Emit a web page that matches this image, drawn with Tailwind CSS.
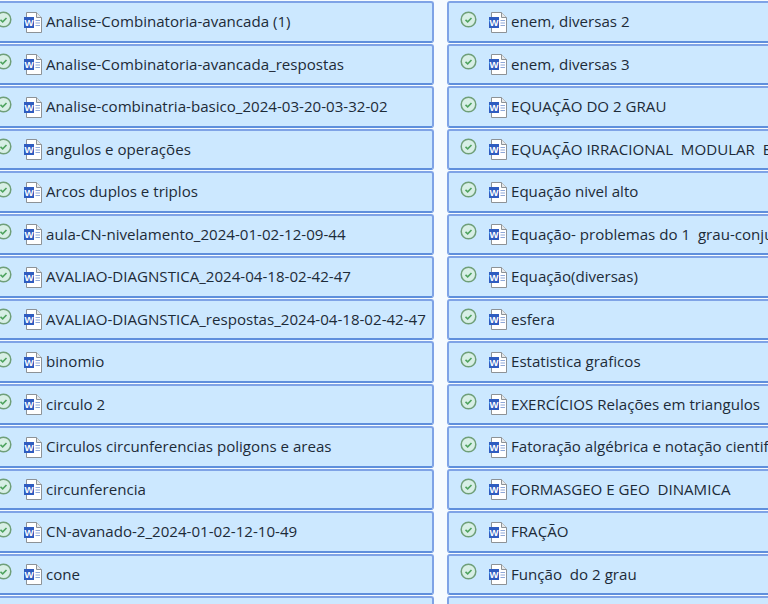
<!DOCTYPE html>
<html lang="pt">
<head>
<meta charset="utf-8" />
<title>Arquivos</title>
<script src="https://cdn.jsdelivr.net/npm/@tailwindcss/browser@4"></script>
</head>
<body class="w-[768px] h-[604px] overflow-hidden bg-[#f6fbff] font-['Open_Sans','Noto_Sans',sans-serif] text-[15.100px] text-[#1d2b38]">
<svg class="hidden">
  <symbol id="ok" viewBox="0 0 17 17">
    <circle cx="8.500" cy="8.500" r="7.300" fill="#d8efe6" stroke="#6f9f78" stroke-width="1.500" />
    <path d="M5.500 8.800l2.200 2 3.800-3.800" fill="none" stroke="#4fa35f" stroke-width="1.600" />
  </symbol>
  <symbol id="word" viewBox="0 0 20 22">
    <path d="M3.500 1.500H13.500L18.500 6.500V21.500H3.500z" fill="#fff" stroke="#8d9296" />
    <path d="M13.500 1.500v5h5" fill="#e6e8ea" stroke="#8d9296" />
    <path d="M12.500 9.500h4.500M12.500 12h4.500M12.500 14.500h4.500" stroke="#8fa8d8" />
    <rect x="1" y="6" width="10" height="11" fill="#2f5cc0" />
    <text x="6" y="14.800" text-anchor="middle" font-family="Liberation Sans" font-weight="700" font-size="9.500" fill="#fff">W</text>
  </symbol>
</svg>
<main class="flex gap-[13px] -ml-[18px] mt-[1px] w-[917px]">
  <section class="w-[452px] shrink-0 grid auto-rows-[42.500px]">
    <div class="mb-[1px] flex items-center pl-[11px] bg-[#cce8ff] border-2 border-[#7fa3e6] border-b-[#5f8fdc] rounded-[3px]"><svg class="w-[17px] h-[17px] mr-[11px] -mt-[5px]"><use href="#ok" /></svg><svg class="w-5 h-[22px] mr-[3px]"><use href="#word" /></svg><span class="whitespace-pre">Analise-Combinatoria-avancada (1)</span></div>
    <div class="mb-[1px] flex items-center pl-[11px] bg-[#cce8ff] border-2 border-[#7fa3e6] border-b-[#5f8fdc] rounded-[3px]"><svg class="w-[17px] h-[17px] mr-[11px] -mt-[5px]"><use href="#ok" /></svg><svg class="w-5 h-[22px] mr-[3px]"><use href="#word" /></svg><span class="whitespace-pre">Analise-Combinatoria-avancada_respostas</span></div>
    <div class="mb-[1px] flex items-center pl-[11px] bg-[#cce8ff] border-2 border-[#7fa3e6] border-b-[#5f8fdc] rounded-[3px]"><svg class="w-[17px] h-[17px] mr-[11px] -mt-[5px]"><use href="#ok" /></svg><svg class="w-5 h-[22px] mr-[3px]"><use href="#word" /></svg><span class="whitespace-pre">Analise-combinatria-basico_2024-03-20-03-32-02</span></div>
    <div class="mb-[1px] flex items-center pl-[11px] bg-[#cce8ff] border-2 border-[#7fa3e6] border-b-[#5f8fdc] rounded-[3px]"><svg class="w-[17px] h-[17px] mr-[11px] -mt-[5px]"><use href="#ok" /></svg><svg class="w-5 h-[22px] mr-[3px]"><use href="#word" /></svg><span class="whitespace-pre">angulos e operações</span></div>
    <div class="mb-[1px] flex items-center pl-[11px] bg-[#cce8ff] border-2 border-[#7fa3e6] border-b-[#5f8fdc] rounded-[3px]"><svg class="w-[17px] h-[17px] mr-[11px] -mt-[5px]"><use href="#ok" /></svg><svg class="w-5 h-[22px] mr-[3px]"><use href="#word" /></svg><span class="whitespace-pre">Arcos duplos e triplos</span></div>
    <div class="mb-[1px] flex items-center pl-[11px] bg-[#cce8ff] border-2 border-[#7fa3e6] border-b-[#5f8fdc] rounded-[3px]"><svg class="w-[17px] h-[17px] mr-[11px] -mt-[5px]"><use href="#ok" /></svg><svg class="w-5 h-[22px] mr-[3px]"><use href="#word" /></svg><span class="whitespace-pre">aula-CN-nivelamento_2024-01-02-12-09-44</span></div>
    <div class="mb-[1px] flex items-center pl-[11px] bg-[#cce8ff] border-2 border-[#7fa3e6] border-b-[#5f8fdc] rounded-[3px]"><svg class="w-[17px] h-[17px] mr-[11px] -mt-[5px]"><use href="#ok" /></svg><svg class="w-5 h-[22px] mr-[3px]"><use href="#word" /></svg><span class="whitespace-pre">AVALIAO-DIAGNSTICA_2024-04-18-02-42-47</span></div>
    <div class="mb-[1px] flex items-center pl-[11px] bg-[#cce8ff] border-2 border-[#7fa3e6] border-b-[#5f8fdc] rounded-[3px]"><svg class="w-[17px] h-[17px] mr-[11px] -mt-[5px]"><use href="#ok" /></svg><svg class="w-5 h-[22px] mr-[3px]"><use href="#word" /></svg><span class="whitespace-pre">AVALIAO-DIAGNSTICA_respostas_2024-04-18-02-42-47</span></div>
    <div class="mb-[1px] flex items-center pl-[11px] bg-[#cce8ff] border-2 border-[#7fa3e6] border-b-[#5f8fdc] rounded-[3px]"><svg class="w-[17px] h-[17px] mr-[11px] -mt-[5px]"><use href="#ok" /></svg><svg class="w-5 h-[22px] mr-[3px]"><use href="#word" /></svg><span class="whitespace-pre">binomio</span></div>
    <div class="mb-[1px] flex items-center pl-[11px] bg-[#cce8ff] border-2 border-[#7fa3e6] border-b-[#5f8fdc] rounded-[3px]"><svg class="w-[17px] h-[17px] mr-[11px] -mt-[5px]"><use href="#ok" /></svg><svg class="w-5 h-[22px] mr-[3px]"><use href="#word" /></svg><span class="whitespace-pre">circulo 2</span></div>
    <div class="mb-[1px] flex items-center pl-[11px] bg-[#cce8ff] border-2 border-[#7fa3e6] border-b-[#5f8fdc] rounded-[3px]"><svg class="w-[17px] h-[17px] mr-[11px] -mt-[5px]"><use href="#ok" /></svg><svg class="w-5 h-[22px] mr-[3px]"><use href="#word" /></svg><span class="whitespace-pre">Circulos circunferencias poligons e areas</span></div>
    <div class="mb-[1px] flex items-center pl-[11px] bg-[#cce8ff] border-2 border-[#7fa3e6] border-b-[#5f8fdc] rounded-[3px]"><svg class="w-[17px] h-[17px] mr-[11px] -mt-[5px]"><use href="#ok" /></svg><svg class="w-5 h-[22px] mr-[3px]"><use href="#word" /></svg><span class="whitespace-pre">circunferencia</span></div>
    <div class="mb-[1px] flex items-center pl-[11px] bg-[#cce8ff] border-2 border-[#7fa3e6] border-b-[#5f8fdc] rounded-[3px]"><svg class="w-[17px] h-[17px] mr-[11px] -mt-[5px]"><use href="#ok" /></svg><svg class="w-5 h-[22px] mr-[3px]"><use href="#word" /></svg><span class="whitespace-pre">CN-avanado-2_2024-01-02-12-10-49</span></div>
    <div class="mb-[1px] flex items-center pl-[11px] bg-[#cce8ff] border-2 border-[#7fa3e6] border-b-[#5f8fdc] rounded-[3px]"><svg class="w-[17px] h-[17px] mr-[11px] -mt-[5px]"><use href="#ok" /></svg><svg class="w-5 h-[22px] mr-[3px]"><use href="#word" /></svg><span class="whitespace-pre">cone</span></div>
    <div class="mb-[1px] flex items-center pl-[11px] bg-[#cce8ff] border-2 border-[#7fa3e6] border-b-[#5f8fdc] rounded-[3px]"></div>
  </section>
  <section class="w-[452px] shrink-0 grid auto-rows-[42.500px]">
    <div class="mb-[1px] flex items-center pl-[11px] bg-[#cce8ff] border-2 border-[#7fa3e6] border-b-[#5f8fdc] rounded-[3px]"><svg class="w-[17px] h-[17px] mr-[11px] -mt-[5px]"><use href="#ok" /></svg><svg class="w-5 h-[22px] mr-[3px]"><use href="#word" /></svg><span class="whitespace-pre">enem, diversas 2</span></div>
    <div class="mb-[1px] flex items-center pl-[11px] bg-[#cce8ff] border-2 border-[#7fa3e6] border-b-[#5f8fdc] rounded-[3px]"><svg class="w-[17px] h-[17px] mr-[11px] -mt-[5px]"><use href="#ok" /></svg><svg class="w-5 h-[22px] mr-[3px]"><use href="#word" /></svg><span class="whitespace-pre">enem, diversas 3</span></div>
    <div class="mb-[1px] flex items-center pl-[11px] bg-[#cce8ff] border-2 border-[#7fa3e6] border-b-[#5f8fdc] rounded-[3px]"><svg class="w-[17px] h-[17px] mr-[11px] -mt-[5px]"><use href="#ok" /></svg><svg class="w-5 h-[22px] mr-[3px]"><use href="#word" /></svg><span class="whitespace-pre">EQUAÇÃO DO 2 GRAU</span></div>
    <div class="mb-[1px] flex items-center pl-[11px] bg-[#cce8ff] border-2 border-[#7fa3e6] border-b-[#5f8fdc] rounded-[3px]"><svg class="w-[17px] h-[17px] mr-[11px] -mt-[5px]"><use href="#ok" /></svg><svg class="w-5 h-[22px] mr-[3px]"><use href="#word" /></svg><span class="whitespace-pre">EQUAÇÃO IRRACIONAL  MODULAR  E</span></div>
    <div class="mb-[1px] flex items-center pl-[11px] bg-[#cce8ff] border-2 border-[#7fa3e6] border-b-[#5f8fdc] rounded-[3px]"><svg class="w-[17px] h-[17px] mr-[11px] -mt-[5px]"><use href="#ok" /></svg><svg class="w-5 h-[22px] mr-[3px]"><use href="#word" /></svg><span class="whitespace-pre">Equação nivel alto</span></div>
    <div class="mb-[1px] flex items-center pl-[11px] bg-[#cce8ff] border-2 border-[#7fa3e6] border-b-[#5f8fdc] rounded-[3px]"><svg class="w-[17px] h-[17px] mr-[11px] -mt-[5px]"><use href="#ok" /></svg><svg class="w-5 h-[22px] mr-[3px]"><use href="#word" /></svg><span class="whitespace-pre">Equação- problemas do 1  grau-conjunto</span></div>
    <div class="mb-[1px] flex items-center pl-[11px] bg-[#cce8ff] border-2 border-[#7fa3e6] border-b-[#5f8fdc] rounded-[3px]"><svg class="w-[17px] h-[17px] mr-[11px] -mt-[5px]"><use href="#ok" /></svg><svg class="w-5 h-[22px] mr-[3px]"><use href="#word" /></svg><span class="whitespace-pre">Equação(diversas)</span></div>
    <div class="mb-[1px] flex items-center pl-[11px] bg-[#cce8ff] border-2 border-[#7fa3e6] border-b-[#5f8fdc] rounded-[3px]"><svg class="w-[17px] h-[17px] mr-[11px] -mt-[5px]"><use href="#ok" /></svg><svg class="w-5 h-[22px] mr-[3px]"><use href="#word" /></svg><span class="whitespace-pre">esfera</span></div>
    <div class="mb-[1px] flex items-center pl-[11px] bg-[#cce8ff] border-2 border-[#7fa3e6] border-b-[#5f8fdc] rounded-[3px]"><svg class="w-[17px] h-[17px] mr-[11px] -mt-[5px]"><use href="#ok" /></svg><svg class="w-5 h-[22px] mr-[3px]"><use href="#word" /></svg><span class="whitespace-pre">Estatistica graficos</span></div>
    <div class="mb-[1px] flex items-center pl-[11px] bg-[#cce8ff] border-2 border-[#7fa3e6] border-b-[#5f8fdc] rounded-[3px]"><svg class="w-[17px] h-[17px] mr-[11px] -mt-[5px]"><use href="#ok" /></svg><svg class="w-5 h-[22px] mr-[3px]"><use href="#word" /></svg><span class="whitespace-pre">EXERCÍCIOS Relações em triangulos</span></div>
    <div class="mb-[1px] flex items-center pl-[11px] bg-[#cce8ff] border-2 border-[#7fa3e6] border-b-[#5f8fdc] rounded-[3px]"><svg class="w-[17px] h-[17px] mr-[11px] -mt-[5px]"><use href="#ok" /></svg><svg class="w-5 h-[22px] mr-[3px]"><use href="#word" /></svg><span class="whitespace-pre">Fatoração algébrica e notação cientifica</span></div>
    <div class="mb-[1px] flex items-center pl-[11px] bg-[#cce8ff] border-2 border-[#7fa3e6] border-b-[#5f8fdc] rounded-[3px]"><svg class="w-[17px] h-[17px] mr-[11px] -mt-[5px]"><use href="#ok" /></svg><svg class="w-5 h-[22px] mr-[3px]"><use href="#word" /></svg><span class="whitespace-pre">FORMASGEO E GEO  DINAMICA</span></div>
    <div class="mb-[1px] flex items-center pl-[11px] bg-[#cce8ff] border-2 border-[#7fa3e6] border-b-[#5f8fdc] rounded-[3px]"><svg class="w-[17px] h-[17px] mr-[11px] -mt-[5px]"><use href="#ok" /></svg><svg class="w-5 h-[22px] mr-[3px]"><use href="#word" /></svg><span class="whitespace-pre">FRAÇÃO</span></div>
    <div class="mb-[1px] flex items-center pl-[11px] bg-[#cce8ff] border-2 border-[#7fa3e6] border-b-[#5f8fdc] rounded-[3px]"><svg class="w-[17px] h-[17px] mr-[11px] -mt-[5px]"><use href="#ok" /></svg><svg class="w-5 h-[22px] mr-[3px]"><use href="#word" /></svg><span class="whitespace-pre">Função  do 2 grau</span></div>
    <div class="mb-[1px] flex items-center pl-[11px] bg-[#cce8ff] border-2 border-[#7fa3e6] border-b-[#5f8fdc] rounded-[3px]"></div>
  </section>
</main>
</body>
</html>
